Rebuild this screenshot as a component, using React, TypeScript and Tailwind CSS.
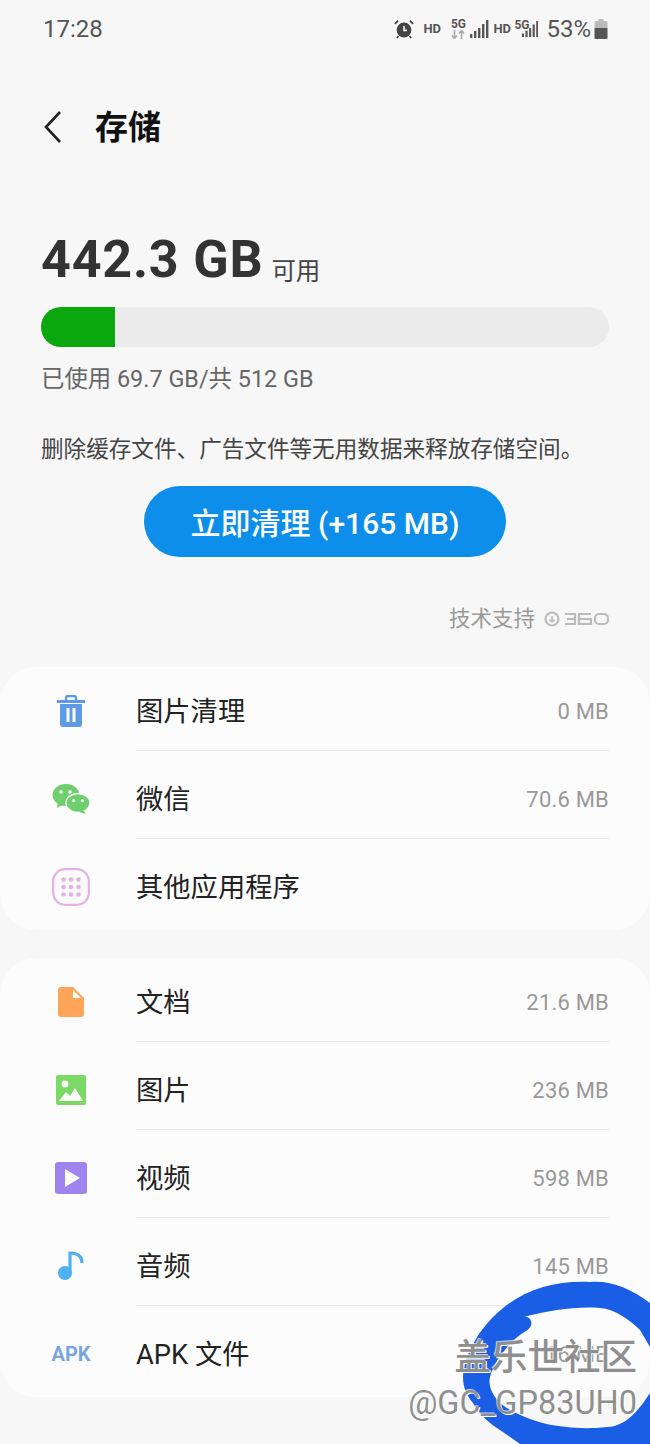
const cjk = "font-['Roboto','Noto_Sans_CJK_SC',sans-serif]";

function SignalBars({ className }: { className?: string }) {
  return (
    <svg width="20" height="20" viewBox="0 0 20 20" className={className} fill="#555">
      <rect x="1" y="15" width="2.4" height="4" />
      <rect x="5" y="12" width="2.4" height="7" />
      <rect x="9" y="9" width="2.4" height="10" />
      <rect x="13" y="5" width="2.4" height="14" />
      <rect x="17" y="1" width="2.4" height="18" />
    </svg>
  );
}

function StatusBar() {
  return (
    <div className="flex h-[56px] items-center justify-between pl-[43px] pr-[42px] pt-[1px] text-[#555]">
      <span className="font-['Roboto',sans-serif] text-[24px]">17:28</span>
      <div className="flex items-center">
        <svg width="20" height="20" viewBox="0 0 20 20" fill="#444">
          <circle cx="10" cy="11" r="7.4" />
          <path d="M1 5l3-3.4M19 5l-3-3.4M4.5 17l-1.6 2M15.5 17l1.6 2" stroke="#444" strokeWidth="1.8" />
          <path d="M10 7v4.4h3" stroke="#f7f7f7" strokeWidth="1.6" fill="none" />
        </svg>
        <span className="ml-[9px] w-[17px] font-['Roboto',sans-serif] text-[13px] font-bold">HD</span>
        <div className="ml-[11px] flex w-[14px] flex-col items-center">
          <span className="font-['Roboto',sans-serif] text-[12px] font-bold leading-[12px]">5G</span>
          <svg width="14" height="9" viewBox="0 0 14 9" fill="none" stroke="#aaa" strokeWidth="1.6">
            <path d="M3.5 0v8M1 5.5l2.5 3 2.5-3M10.5 9V1M8 3.5l2.5-3 2.5 3" />
          </svg>
        </div>
        <SignalBars className="ml-[4px]" />
        <span className="ml-[4px] w-[17px] font-['Roboto',sans-serif] text-[13px] font-bold">HD</span>
        <div className="ml-[4px] flex w-[24px] items-start">
          <span className="font-['Roboto',sans-serif] text-[12px] font-bold leading-[12px]">5G</span>
          <SignalBars className="ml-[-9px]" />
        </div>
        <span className="ml-[8px] font-['Roboto',sans-serif] text-[24px]">53%</span>
        <svg width="14" height="20" viewBox="0 0 13 20" className="ml-[3px]">
          <path d="M4 0h5v2h3a1 1 0 0 1 1 1v6H0V3a1 1 0 0 1 1-1h3z" fill="#bbb" />
          <path d="M0 9h13v10a1 1 0 0 1-1 1H1a1 1 0 0 1-1-1z" fill="#555" />
        </svg>
      </div>
    </div>
  );
}

function Header() {
  return (
    <div className="mt-[37px] flex h-[68px] items-center pl-[43px]">
      <svg width="20" height="34" viewBox="0 0 20 34" fill="none" stroke="#222" strokeWidth="2.6">
        <path d="M17 2L3 17l14 15" />
      </svg>
      <h1 className={`ml-[32px] text-[33px] font-bold leading-none text-[#111] ${cjk}`}>存储</h1>
    </div>
  );
}

function Summary() {
  return (
    <div className="mt-[71px] px-[41px]">
      <div className="flex h-[56px] items-end">
        <span className="font-['Roboto',sans-serif] text-[52px] font-bold leading-[56px] tracking-[0.8px] text-[#333]">
          442.3 GB
        </span>
        <span className={`mb-[1px] ml-[8px] text-[24.5px] leading-[30px] text-[#444] ${cjk}`}>可用</span>
      </div>
      <div className="mt-[19px] h-[40px] overflow-hidden rounded-full bg-[#ebebeb]">
        <div className="h-full w-[74px] bg-[#0aa70f]" />
      </div>
      <p className={`mt-[17px] text-[23.4px] leading-[30px] text-[#666] ${cjk}`}>已使用 69.7 GB/共 512 GB</p>
      <p className={`mt-[41px] whitespace-nowrap text-[22.6px] leading-[30px] text-[#444] ${cjk}`}>
        删除缓存文件、广告文件等无用数据来释放存储空间。
      </p>
      <button
        className={`mx-auto mt-[21px] block h-[71px] w-[362px] rounded-full bg-[#0c8eea] pt-[3px] text-[30px] font-medium text-white ${cjk}`}
      >
        立即清理 (+165 MB)
      </button>
      <div className="mt-[47px] flex h-[30px] items-center justify-end">
        <span className={`text-[21.5px] text-[#999] ${cjk}`}>技术支持</span>
        <svg width="66" height="18" viewBox="0 0 66 18" className="ml-[8px]" fill="none" stroke="#bbb" strokeWidth="2.2">
          <circle cx="9" cy="9" r="6.5" />
          <path d="M9 6v6M6.5 9.5L9 12l2.5-2.5" strokeWidth="1.6" />
          <path d="M22 4h10v10H22M24 9h8M48 4H36v10h12V9H36" />
          <rect x="52" y="4" width="13" height="10" rx="4" />
        </svg>
      </div>
    </div>
  );
}

function Row({ icon, label, value }: { icon: React.ReactNode; label: string; value?: string }) {
  return (
    <div className="flex h-[78px] items-center pr-[41px]">
      <div className="flex w-[136px] shrink-0 justify-center pl-[6px]">{icon}</div>
      <span className={`flex-1 pt-[2px] text-[27.3px] text-[#222] ${cjk}`}>{label}</span>
      {value && <span className="font-['Roboto',sans-serif] text-[22px] tracking-[0.2px] text-[#999]">{value}</span>}
    </div>
  );
}

function Divider() {
  return <div className="mb-[9px] ml-[136px] mr-[41px] h-px bg-[#e6e6e6]" />;
}

const TrashIcon = (
  <svg width="28" height="32" viewBox="0 0 28 32">
    <path d="M9 5V3a2 2 0 0 1 2-2h6a2 2 0 0 1 2 2v2" fill="none" stroke="#5f9ae6" strokeWidth="2.4" />
    <path d="M0 5h28v3H0z" fill="#5f9ae6" />
    <path d="M3 9h22v20a3 3 0 0 1-3 3H6a3 3 0 0 1-3-3z" fill="#5f9ae6" />
    <rect x="9.5" y="13" width="3" height="14" fill="#fcfcfc" />
    <rect x="15.5" y="13" width="3" height="14" fill="#fcfcfc" />
  </svg>
);

const WechatIcon = (
  <svg width="38" height="30" viewBox="0 0 38 30">
    <ellipse cx="14" cy="11" rx="13.5" ry="11" fill="#6fcf6f" />
    <path d="M6 18l-1 6 7-4z" fill="#6fcf6f" />
    <ellipse cx="26" cy="19" rx="12" ry="9.5" fill="#6fcf6f" stroke="#fcfcfc" strokeWidth="1.4" />
    <path d="M31 26l3 4-7-2z" fill="#6fcf6f" />
    <circle cx="9" cy="8" r="1.8" fill="#fcfcfc" />
    <circle cx="18" cy="8" r="1.8" fill="#fcfcfc" />
    <circle cx="21.5" cy="16.5" r="1.6" fill="#fcfcfc" />
    <circle cx="30.5" cy="16.5" r="1.6" fill="#fcfcfc" />
  </svg>
);

const AppsIcon = (
  <svg width="38" height="38" viewBox="0 0 38 38">
    <rect x="1.2" y="1.2" width="35.6" height="35.6" rx="12" fill="none" stroke="#e6b0e6" strokeWidth="2.2" />
    {[11.5, 19, 26.5].map((y) =>
      [11.5, 19, 26.5].map((x) => <circle key={`${x}-${y}`} cx={x} cy={y} r="2.3" fill="#e6b0e6" />),
    )}
  </svg>
);

const FileIcon = (
  <svg width="26" height="30" viewBox="0 0 26 30">
    <path d="M3 0h12l11 11v16a3 3 0 0 1-3 3H3a3 3 0 0 1-3-3V3a3 3 0 0 1 3-3z" fill="#ffa55a" />
    <path d="M15 3l8 8h-8z" fill="#fcfcfc" />
  </svg>
);

const ImageIcon = (
  <svg width="30" height="30" viewBox="0 0 30 30">
    <rect width="30" height="30" rx="2" fill="#7bd966" />
    <circle cx="9" cy="9" r="3.4" fill="#fcfcfc" />
    <path d="M3 26l7-9 4 4 5-8 8 13z" fill="#fcfcfc" />
  </svg>
);

const VideoIcon = (
  <svg width="32" height="32" viewBox="0 0 32 32">
    <rect width="32" height="32" rx="3" fill="#9d84ee" />
    <path d="M10 7l15 9-15 9z" fill="#fcfcfc" />
  </svg>
);

const MusicIcon = (
  <svg width="28" height="30" viewBox="0 0 28 30">
    <circle cx="8" cy="22" r="7" fill="#4fb0f2" />
    <path d="M13 22V2c7 0 12 3 12 10" fill="none" stroke="#4fb0f2" strokeWidth="3.2" />
  </svg>
);

const ApkIcon = (
  <span className="font-['Roboto',sans-serif] text-[20px] font-bold text-[#7aa5dc]">APK</span>
);

export default function App() {
  return (
    <div className="relative h-[1444px] w-[650px] overflow-hidden bg-[#f7f7f7]">
      <StatusBar />
      <Header />
      <Summary />

      <div className="mt-[33px] rounded-[36px] bg-[#fcfcfc] pb-[4px] pt-[5px]">
        <Row icon={TrashIcon} label="图片清理" value="0 MB" />
        <Divider />
        <Row icon={WechatIcon} label="微信" value="70.6 MB" />
        <Divider />
        <Row icon={AppsIcon} label="其他应用程序" />
      </div>

      <div className="mt-[28px] rounded-[36px] bg-[#fcfcfc] pb-[4px] pt-[5px]">
        <Row icon={FileIcon} label="文档" value="21.6 MB" />
        <Divider />
        <Row icon={ImageIcon} label="图片" value="236 MB" />
        <Divider />
        <Row icon={VideoIcon} label="视频" value="598 MB" />
        <Divider />
        <Row icon={MusicIcon} label="音频" value="145 MB" />
        <Divider />
        <Row icon={ApkIcon} label="APK 文件" value="16 MB" />
      </div>

      {/* hand-drawn marker ring over the corner */}
      <svg className="absolute left-0 top-0" width="650" height="1444" viewBox="0 0 650 1444">
        <path
          fill="#1b5ee6"
          d="M650 1303C630 1288 610 1280 590 1282C545 1280 505 1295 477 1337C470 1350 463 1362 463 1377C463 1388 467 1396 473 1403C480 1415 490 1424 500 1430L520 1444L650 1444L650 1393C645 1400 643 1404 640 1407C630 1420 618 1427 607 1427C590 1429 575 1428 567 1427C555 1426 545 1424 533 1420C520 1415 508 1410 500 1403C492 1395 488 1385 490 1377C494 1362 510 1340 526 1331C532 1327 533 1322 529 1318C526 1316 523 1317 520 1318C535 1314 545 1312 557 1310C572 1308 585 1307 600 1308C615 1309 630 1320 640 1330L650 1347Z"
        />
      </svg>

      {/* community watermark */}
      <div className="absolute bottom-[19px] right-[13px] flex flex-col items-end text-[#8f8f8f] [text-shadow:1px_1px_0_#fff,-1px_-1px_0_rgba(255,255,255,0.7)]">
        <span className={`text-[36.5px] font-medium leading-[46px] ${cjk}`}>盖乐世社区</span>
        <span className="font-['Roboto',sans-serif] text-[32.5px] leading-[44px]">@GC_GP83UH0</span>
      </div>
    </div>
  );
}
